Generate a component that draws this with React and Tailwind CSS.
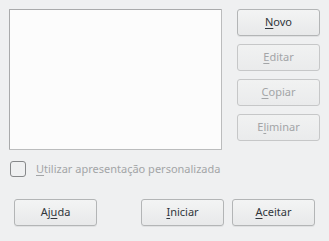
export default function App() {
  const font = { fontFamily: '"Noto Sans", "DejaVu Sans", sans-serif' };
  const Btn = ({ children, disabled }) => (
    <div
      className={`h-[27px] w-[83px] flex items-center justify-center rounded-[3px] border text-[11px] ${
        disabled
          ? "border-[#c6c7c8] text-[#a3a5a7] bg-gradient-to-b from-[#f1f2f2] to-[#eaebec]"
          : "border-[#b3b5b6] text-[#31363b] bg-gradient-to-b from-[#f3f4f4] to-[#e8e9ea] shadow-[0_1px_0_rgba(0,0,0,0.06)]"
      }`}
    >
      {children}
    </div>
  );
  const U = ({ children }) => <span className="underline underline-offset-[2px]">{children}</span>;
  return (
    <div className="w-[329px] h-[241px] bg-[#eff0f1] overflow-hidden" style={font}>
      <div className="flex pt-[9px] pl-[9px]">
        <div className="w-[213px] h-[141px] bg-[#fcfcfc] border border-[#bbbcbd] border-t-[#a9aaab] border-l-[#a9aaab] rounded-[1px]" />
        <div className="flex flex-col gap-[8px] ml-[15px]">
          <Btn><U>N</U>ovo</Btn>
          <Btn disabled><U>E</U>ditar</Btn>
          <Btn disabled><U>C</U>opiar</Btn>
          <Btn disabled>E<U>l</U>iminar</Btn>
        </div>
      </div>
      <div className="flex items-center mt-[11px] ml-[10px]">
        <div className="w-[16px] h-[16px] rounded-[3px] border border-[#86888a] bg-[#eff0f1]" />
        <span className="ml-[10px] text-[11px] text-[#a3a5a7]"><U>U</U>tilizar apresentação personalizada</span>
      </div>
      <div className="flex mt-[21px] ml-[14px]">
        <Btn>Aj<U>u</U>da</Btn>
        <div className="ml-[44px]"><Btn><U>I</U>niciar</Btn></div>
        <div className="ml-[8px]"><Btn><U>A</U>ceitar</Btn></div>
      </div>
    </div>
  );
}
